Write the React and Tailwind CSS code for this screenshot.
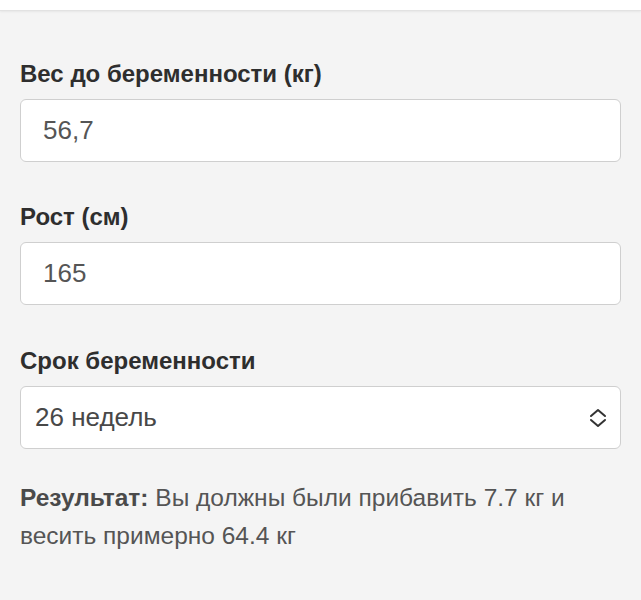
// Pregnancy weight calculator form

const font = { fontFamily: '"Liberation Sans", Arial, sans-serif' };

function Field({ label, className = '', children }) {
  return (
    <div className={className}>
      <label className="block text-[24px] leading-[28px] font-bold text-[#2e2e2e] mb-[11px]">{label}</label>
      {children}
    </div>
  );
}

function TextInput({ value }) {
  return (
    <input
      type="text"
      defaultValue={value}
      className="block w-full h-[63px] rounded-[6px] border border-[#cfcfcf] bg-white px-[22px] text-[26px] text-[#555] outline-none"
    />
  );
}

function ChevronUpDown() {
  return (
    <svg width="18" height="20" viewBox="0 0 18 20" fill="none" stroke="#333" strokeWidth="2" strokeLinecap="round" strokeLinejoin="round">
      <path d="M2 8 L9 2 L16 8" />
      <path d="M2 12 L9 18 L16 12" />
    </svg>
  );
}

export default function App() {
  return (
    <div className="min-h-[600px] bg-[#f4f4f4]" style={font}>
      <div className="h-[11px] bg-white border-b border-[#e2e2e2] shadow-[0_1px_2px_rgba(0,0,0,0.06)]" />
      <div className="px-[20px] pt-[49px]">
        <div className="flex flex-col gap-[41px]">
          <Field label="Вес до беременности (кг)">
            <TextInput value="56,7" />
          </Field>
          <Field label="Рост (см)">
            <TextInput value="165" />
          </Field>
          <Field label="Срок беременности" className="mt-[1px]">
            <div className="flex items-center justify-between h-[63px] rounded-[6px] border border-[#cfcfcf] bg-white pl-[14px] pr-[13px] text-[26px] text-[#484848]">
              <span>26 недель</span>
              <ChevronUpDown />
            </div>
          </Field>
        </div>
        <p className="mt-[30px] text-[24.5px] leading-[38px] text-[#555] pr-[20px]">
          <span className="font-bold text-[#4a4a4a]">Результат:</span> Вы должны были прибавить 7.7 кг и весить примерно 64.4 кг
        </p>
      </div>
    </div>
  );
}
